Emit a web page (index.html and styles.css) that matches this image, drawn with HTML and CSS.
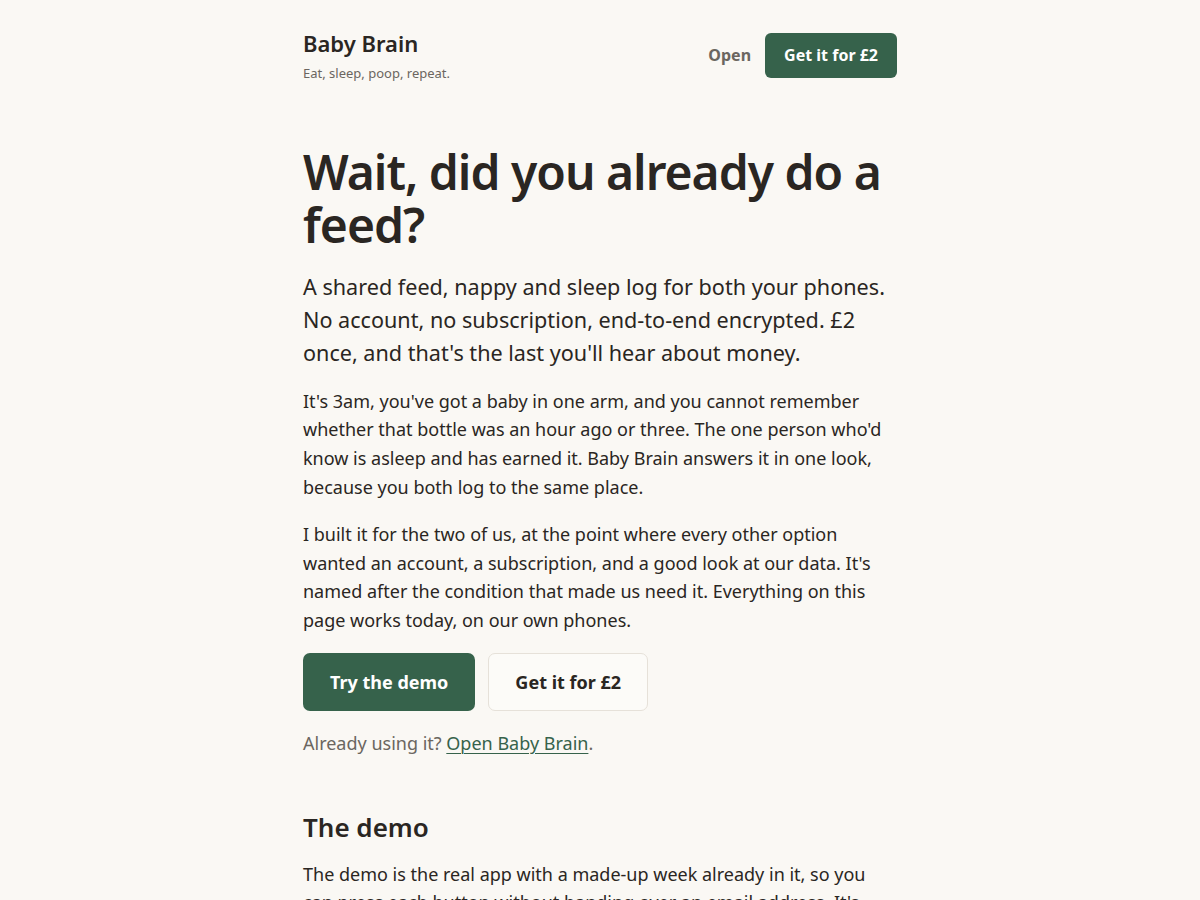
FILE: index.html
```html
<!DOCTYPE html>
<html lang="en-gb">
<head>
  <meta charset="UTF-8">
  <title>Baby Brain</title>
  <link rel="stylesheet" href="styles.css">
</head>
<body>

<div class="page">
  <!-- Header -->
  <header class="top">
    <div class="brand">
      <div class="brand-name">Baby Brain</div>
      <div class="tagline">Eat, sleep, poop, repeat.</div>
    </div>
    <nav class="top-nav">
      <a href="#" class="nav-link">Open</a>
      <a href="#" class="btn btn-primary btn-small">Get it for £2</a>
    </nav>
  </header>

  <!-- Hero -->
  <main>
    <h1>Wait, did you already do a feed?</h1>
    <p class="lead">A shared feed, nappy and sleep log for both your phones. No account, no subscription, end-to-end encrypted. £2 once, and that's the last you'll hear about money.</p>
    <p>It's 3am, you've got a baby in one arm, and you cannot remember whether that bottle was an hour ago or three. The one person who'd know is asleep and has earned it. Baby Brain answers it in one look, because you both log to the same place.</p>
    <p>I built it for the two of us, at the point where every other option wanted an account, a subscription, and a good look at our data. It's named after the condition that made us need it. Everything on this page works today, on our own phones.</p>

    <div class="actions">
      <a href="#" class="btn btn-primary">Try the demo</a>
      <a href="#" class="btn btn-secondary">Get it for £2</a>
    </div>
    <p class="muted">Already using it? <a href="#" class="text-link">Open Baby Brain</a>.</p>

    <section class="section">
      <h2>The demo</h2>
      <p>The demo is the real app with a made-up week already in it, so you can press each button without handing over an email address. It's reset every time you open it, and nothing you do there leaves your phone.</p>
    </section>
  </main>
</div>

</body>
</html>
```

FILE: styles.css
```css
* {
  margin: 0; padding: 0; box-sizing: border-box;
}
body {
  font-family: "Noto Sans", "Open Sans", sans-serif;
  background-color: #faf8f4;
  color: #2a2622;
}

a {
  color: inherit;
  text-decoration: none;
}

.page {
  width: 594px;
  margin: 0 auto;
}

/* Header */
.top {
  display: flex;
  justify-content: space-between;
  align-items: center;
  padding-top: 29px;
}

.brand-name {
  font-size: 22px;
  font-weight: 600;
  line-height: 1.3;
}

.tagline {
  font-size: 13px;
  color: #6b6660;
  margin-top: 6px;
}

.top-nav {
  display: flex;
  align-items: center;
  gap: 14px;
}

.nav-link {
  font-size: 16px;
  font-weight: 700;
  color: #6b6660;
}

/* Buttons */
.btn {
  display: inline-block;
  font-size: 18px;
  font-weight: 700;
  line-height: 28px;
  padding: 14px 26px;
  border-radius: 7px;
  border: 1px solid transparent;
}

.btn-primary {
  background-color: #36624b;
  color: white;
}

.btn-small {
  font-size: 16px;
  line-height: 23px;
  padding: 10px 18px;
  border-radius: 6px;
}

.btn-secondary {
  background-color: #fcfbf8;
  border-color: #e6e1d9;
  color: #2a2622;
}

/* Content */
main {
  padding-top: 63px;
}

h1 {
  font-size: 48px;
  font-weight: 600;
  line-height: 53.5px;
  letter-spacing: -1px;
  margin-bottom: 18px;
}

p {
  font-size: 18px;
  line-height: 1.6;
  margin-bottom: 18px;
}

.lead {
  font-size: 21.6px;
  line-height: 33px;
}

.actions {
  display: flex;
  gap: 13px;
  margin-bottom: 18px;
}

.muted {
  color: #6b6660;
}

.text-link {
  color: #36624b;
  text-decoration: underline;
  text-underline-offset: 3px;
  text-decoration-thickness: 1px;
}

.section {
  margin-top: 53px;
}

h2 {
  font-size: 26px;
  font-weight: 600;
  line-height: 1.3;
  margin-bottom: 15px;
}
```
